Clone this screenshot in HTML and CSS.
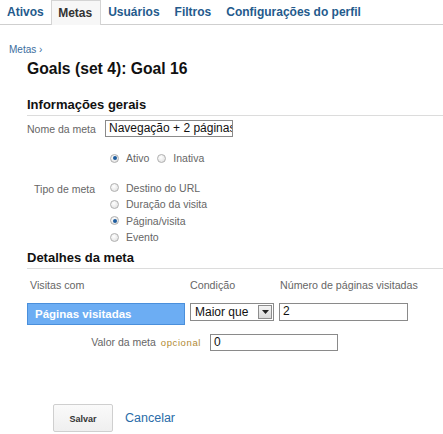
FILE: index.html
```html
<!DOCTYPE html>
<html lang="pt">
<head>
<meta charset="utf-8">
<link rel="stylesheet" href="styles.css">
</head>
<body>
<nav class="tabs">
  <a class="tab">Ativos</a>
  <a class="tab active">Metas</a>
  <a class="tab">Usuários</a>
  <a class="tab">Filtros</a>
  <a class="tab">Configurações do perfil</a>
</nav>
<div class="crumb">Metas ›</div>
<h1 class="title">Goals (set 4): Goal 16</h1>

<section class="section">
  <h2 class="sec-head">Informações gerais</h2>
  <div class="row name-row">
    <span class="lbl">Nome da meta</span>
    <span class="field name-field">Navegação + 2 páginas</span>
  </div>
  <div class="row status-row">
    <span class="lbl"></span>
    <span class="radios-inline">
      <span class="opt"><span class="radio on"></span>Ativo</span>
      <span class="opt"><span class="radio"></span>Inativa</span>
    </span>
  </div>
  <div class="row type-row">
    <span class="lbl type-lbl">Tipo de meta</span>
    <span class="radios">
      <span class="opt"><span class="radio"></span>Destino do URL</span>
      <span class="opt"><span class="radio"></span>Duração da visita</span>
      <span class="opt"><span class="radio on"></span>Página/visita</span>
      <span class="opt"><span class="radio"></span>Evento</span>
    </span>
  </div>
</section>

<section class="section details">
  <h2 class="sec-head">Detalhes da meta</h2>
  <div class="cols head-cols">
    <span class="c1">Visitas com</span>
    <span class="c2">Condição</span>
    <span class="c3">Número de páginas visitadas</span>
  </div>
  <div class="cols ctrl-cols">
    <span class="blue-box">Páginas visitadas</span>
    <span class="select">Maior que<span class="arrow"><svg width="7" height="4" viewBox="0 0 7 4"><path d="M0 0h7L3.5 4z" fill="#222"/></svg></span></span>
    <span class="field num-field">2</span>
  </div>
  <div class="value-row">
    <span class="value-lbl">Valor da meta <span class="optional">opcional</span></span>
    <span class="field value-field">0</span>
  </div>
</section>

<div class="actions">
  <span class="btn">Salvar</span>
  <a class="cancel">Cancelar</a>
</div>
</body>
</html>
```
FILE: styles.css
```css
* { box-sizing: border-box; }
body {
  margin: 0;
  font-family: "Liberation Sans", Arial, sans-serif;
  color: #222;
  background: #fff;
  width: 443px;
  overflow: hidden;
}
.tabs {
  display: flex;
  height: 25px;
  border-bottom: 1px solid #cfcfcf;
}
.tab {
  font-size: 12px;
  font-weight: bold;
  color: #245a8c;
  line-height: 24px;
  padding: 0 7.5px;
  white-space: nowrap;
}
.tab:first-child { padding-left: 7px; }
.tab.active {
  color: #333;
  background: #f7f7f7;
  border: 1px solid #d4d4d4;
  border-bottom: none;
  height: 25px;
  margin-bottom: -1px;
  padding: 0 7.5px 0 6px;
}
.crumb {
  margin: 19px 0 0 9px;
  font-size: 10px;
  line-height: 12px;
  color: #3b6e9e;
}
.title {
  margin: 4px 0 0 27px;
  font-size: 15.7px;
  line-height: 18px;
  font-weight: bold;
  color: #111;
}
.section { margin-left: 27px; }
.sec-head {
  margin: 19px 0 0;
  font-size: 13px;
  line-height: 16px;
  font-weight: bold;
  color: #111;
  padding-bottom: 2px;
  border-bottom: 1px solid #dcdcdc;
}
.row { display: flex; }
.lbl {
  width: 68px;
  flex: none;
  text-align: right;
  font-size: 10.5px;
  color: #666;
  margin-right: 10px;
  white-space: nowrap;
}
.name-row { margin-top: 4px; align-items: center; }
.field {
  border: 1px solid #8a8a8a;
  background: #fff;
  height: 17px;
  font-size: 12px;
  line-height: 15px;
  padding: 0 3px;
  color: #111;
  white-space: nowrap;
  overflow: hidden;
}
.name-field { width: 128px; }
.status-row { margin-top: 13px; }
.radios-inline { display: flex; gap: 8px; margin-left: 5px; }
.opt {
  display: flex;
  align-items: center;
  height: 16.5px;
  font-size: 10.5px;
  color: #666;
}
.radio {
  width: 9px;
  height: 9px;
  border-radius: 50%;
  border: 1px solid #b0b0b0;
  background: radial-gradient(circle at 40% 35%, #fff, #dcdcdc);
  margin-right: 7px;
  position: relative;
}
.radio.on::after {
  content: "";
  position: absolute;
  left: 1.5px;
  top: 1.5px;
  width: 4px;
  height: 4px;
  border-radius: 50%;
  background: #1d5c9e;
}
.type-row { margin-top: 13px; }
.type-lbl { padding-top: 3px; }
.radios { display: flex; flex-direction: column; margin-left: 5px; }
.details .sec-head { margin-top: 4px; }
.cols { display: flex; }
.head-cols {
  margin-top: 10px;
  font-size: 10.7px;
  line-height: 12px;
  color: #666;
}
.c1 { width: 163px; padding-left: 3px; }
.c2 { width: 90px; }
.ctrl-cols { margin-top: 12px; align-items: flex-start; }
.blue-box {
  width: 158px;
  height: 22px;
  background: #6cadf3;
  border: 1px solid #4a8fdb;
  color: #fff;
  font-weight: bold;
  font-size: 11.5px;
  line-height: 20px;
  padding-left: 7px;
  margin-right: 5px;
}
.select {
  display: flex;
  align-items: center;
  justify-content: space-between;
  width: 84px;
  height: 18px;
  border: 1px solid #8a8a8a;
  font-size: 12px;
  padding: 0 1px 0 4px;
  color: #111;
  margin-right: 5px;
}
.arrow {
  width: 14px;
  height: 14px;
  border: 1px solid #8d8d8d;
  background: linear-gradient(#f4f4f4, #d8d8d8);
  display: flex;
  align-items: center;
  justify-content: center;
}
.num-field { width: 129px; height: 18px; }
.value-row {
  display: flex;
  align-items: center;
  margin-top: 9px;
}
.value-lbl {
  width: 174px;
  text-align: right;
  margin-right: 9px;
  font-size: 10.5px;
  color: #666;
  white-space: nowrap;
}
.optional {
  color: #b18a34;
  font-size: 9.5px;
  letter-spacing: 0.6px;
  margin-left: 2px;
}
.value-field { width: 128px; }
.actions {
  display: flex;
  align-items: center;
  margin: 53px 0 0 53px;
}
.btn {
  width: 60px;
  height: 28px;
  border: 1px solid #cfcfcf;
  border-radius: 2px;
  background: linear-gradient(#fafafa, #efefef);
  font-size: 9px;
  font-weight: bold;
  color: #333;
  text-align: center;
  line-height: 28px;
  margin-right: 12px;
}
.cancel {
  font-size: 12.5px;
  color: #2a6ca8;
}
```
